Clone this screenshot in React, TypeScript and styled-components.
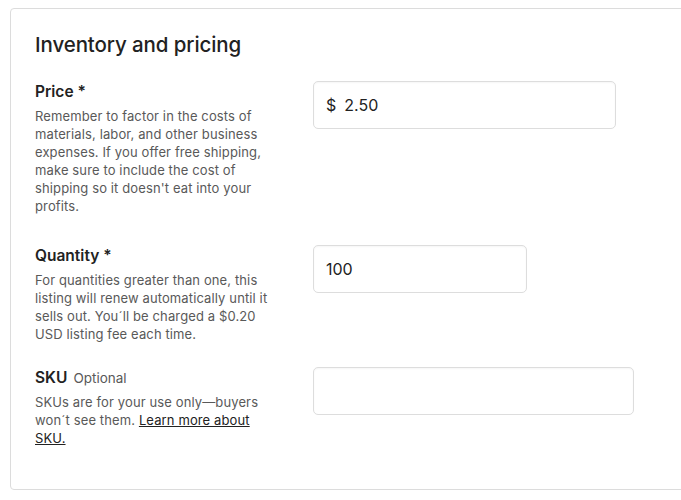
import React from "react";
import styled, { createGlobalStyle } from "styled-components";

const Global = createGlobalStyle`
  html, body { margin: 0; padding: 0; background: #fff; }
  body { font-family: Inter, "Noto Sans", Arial, sans-serif; color: #222; }
  * { box-sizing: border-box; }
`;

const Page = styled.div`
  padding: 8px 0 0 10px;
  width: 681px;
  overflow: hidden;
`;

const Card = styled.section`
  width: 680px;
  height: 482px;
  border: 1px solid #dcdcdc;
  border-radius: 4px;
  padding: 22px 24px 0 24px;
`;

const Title = styled.h2`
  margin: 0 0 22px 0;
  font-size: 20.5px;
  line-height: 28px;
  font-weight: 500;
  color: #222;
  letter-spacing: -0.1px;
`;

const Rows = styled.div`
  display: flex;
  flex-direction: column;
`;

const Row = styled.div<{ $top?: number }>`
  display: grid;
  grid-template-columns: 240px auto;
  column-gap: 38px;
  align-items: start;
  margin-top: ${(p) => p.$top ?? 0}px;
`;

const Info = styled.div`
  display: flex;
  flex-direction: column;
  padding-top: 1px;
`;

const Label = styled.div`
  font-size: 15.5px;
  line-height: 20px;
  font-weight: 600;
  color: #222;
  margin-bottom: 5px;
`;

const Optional = styled.span`
  font-weight: 400;
  font-size: 13.5px;
  color: #595959;
  margin-left: 6px;
`;

const Desc = styled.p`
  margin: 0;
  font-size: 13px;
  letter-spacing: 0.12px;
  line-height: 18px;
  color: #595959;

  a {
    color: #222;
    text-decoration: underline;
  }
`;

const InputBox = styled.div<{ $w: number }>`
  width: ${(p) => p.$w}px;
  height: 48px;
  border: 1px solid #dddddd;
  border-radius: 5px;
  box-shadow: inset 0 1px 2px rgba(0, 0, 0, 0.04);
  display: flex;
  align-items: center;
  padding: 0 12px;
  gap: 8px;
  font-size: 16px;
  color: #222;
`;

const Prefix = styled.span`
  color: #222;
`;

const Value = styled.span`
  color: #222;
`;

export default function App() {
  return (
    <Page>
      <Global />
      <Card>
        <Title>Inventory and pricing</Title>
        <Rows>
          <Row>
            <Info>
              <Label>Price *</Label>
              <Desc>
                Remember to factor in the costs of materials, labor, and other business expenses. If you offer free
                shipping, make sure to include the cost of shipping so it doesn't eat into your profits.
              </Desc>
            </Info>
            <InputBox $w={303}>
              <Prefix>$</Prefix>
              <Value>2.50</Value>
            </InputBox>
          </Row>
          <Row $top={30}>
            <Info>
              <Label>Quantity *</Label>
              <Desc>
                For quantities greater than one, this listing will renew automatically until it sells out. You´ll be
                charged a $0.20 USD listing fee each time.
              </Desc>
            </Info>
            <InputBox $w={214}>
              <Value>100</Value>
            </InputBox>
          </Row>
          <Row $top={24}>
            <Info>
              <Label>
                SKU<Optional>Optional</Optional>
              </Label>
              <Desc>
                SKUs are for your use only—buyers won´t see them. <a href="#">Learn more about SKU.</a>
              </Desc>
            </Info>
            <InputBox $w={321} />
          </Row>
        </Rows>
      </Card>
    </Page>
  );
}
